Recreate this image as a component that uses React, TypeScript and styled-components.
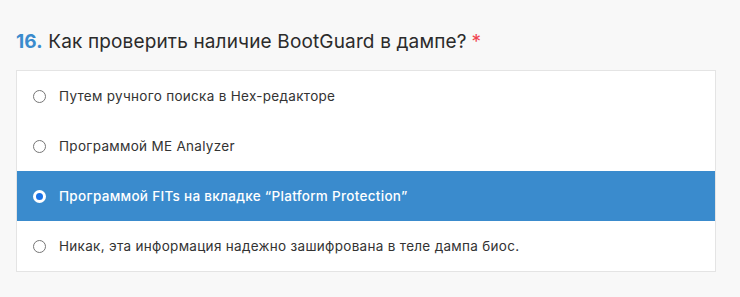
import { useState } from 'react'
import styled, { createGlobalStyle } from 'styled-components'

const GlobalStyle = createGlobalStyle`
  html, body {
    margin: 0;
    padding: 0;
    background: #f8f8f8;
  }
  body {
    font-family: Inter, "Noto Sans", sans-serif;
    color: #333;
  }
`

const Page = styled.div`
  width: 740px;
  height: 297px;
  padding: 30px 24px 0 16px;
  box-sizing: border-box;
`

const Question = styled.h2`
  margin: 0 0 16px;
  font-size: 19px;
  font-weight: 400;
  line-height: 24px;
  letter-spacing: 0.15px;
  color: #2b2b2b;
`

const Number = styled.span`
  color: #3a8bcd;
  font-weight: 700;
`

const Required = styled.span`
  color: #f0434f;
  margin-left: 5px;
`

const Options = styled.div`
  width: 700px;
  box-sizing: border-box;
  border: 1px solid #e4e4e4;
  background: #fff;
  display: flex;
  flex-direction: column;
`

const Option = styled.label<{ $active: boolean }>`
  height: 50px;
  display: flex;
  align-items: center;
  gap: 13px;
  padding-left: 16px;
  font-size: 13.5px;
  letter-spacing: 0.3px;
  cursor: pointer;
  background: ${(p) => (p.$active ? '#3a8bcd' : '#fff')};
  color: ${(p) => (p.$active ? '#fff' : '#333')};
  font-weight: ${(p) => (p.$active ? 500 : 400)};
`

const Radio = styled.span<{ $active: boolean }>`
  width: 13px;
  height: 13px;
  border-radius: 50%;
  box-sizing: border-box;
  flex-shrink: 0;
  border: ${(p) => (p.$active ? '3px solid #fff' : '1px solid #767676')};
  background: ${(p) => (p.$active ? '#1a73e8' : '#fff')};
`

const answers = [
  'Путем ручного поиска в Hex-редакторе',
  'Программой ME Analyzer',
  'Программой FITs на вкладке “Platform Protection”',
  'Никак, эта информация надежно зашифрована в теле дампа биос.',
]

export default function App() {
  const [selected, setSelected] = useState(2)

  return (
    <>
      <GlobalStyle />
      <Page>
        <Question>
          <Number>16.</Number> Как проверить наличие BootGuard в дампе?
          <Required>*</Required>
        </Question>
        <Options>
          {answers.map((text, i) => (
            <Option key={i} $active={i === selected} onClick={() => setSelected(i)}>
              <Radio $active={i === selected} />
              {text}
            </Option>
          ))}
        </Options>
      </Page>
    </>
  )
}
